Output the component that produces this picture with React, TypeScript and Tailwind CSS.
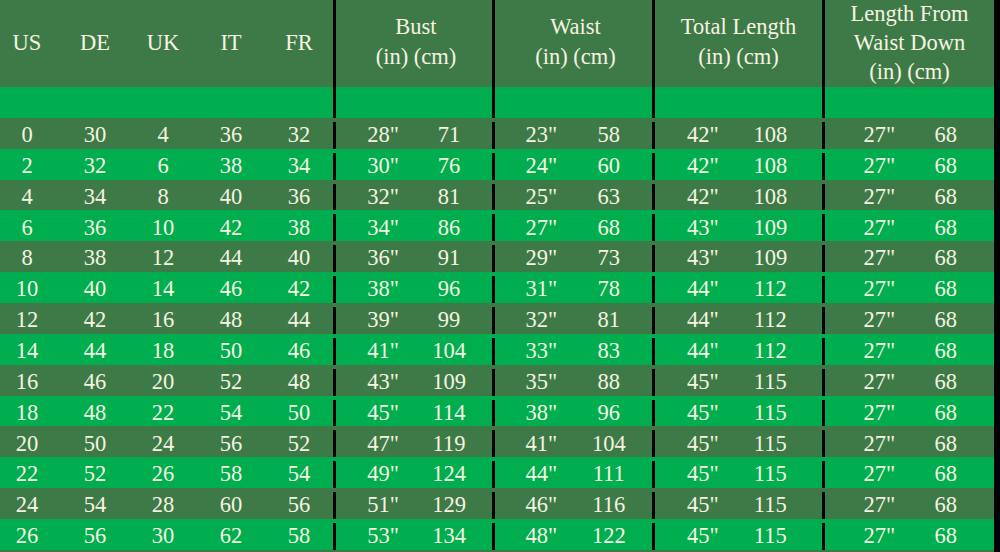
const sizes = [
  { us: 0, de: 30, uk: 4, it: 36, fr: 32, bi: 28, bc: 71, wi: 23, wc: 58, ti: 42, tc: 108, li: 27, lc: 68 },
  { us: 2, de: 32, uk: 6, it: 38, fr: 34, bi: 30, bc: 76, wi: 24, wc: 60, ti: 42, tc: 108, li: 27, lc: 68 },
  { us: 4, de: 34, uk: 8, it: 40, fr: 36, bi: 32, bc: 81, wi: 25, wc: 63, ti: 42, tc: 108, li: 27, lc: 68 },
  { us: 6, de: 36, uk: 10, it: 42, fr: 38, bi: 34, bc: 86, wi: 27, wc: 68, ti: 43, tc: 109, li: 27, lc: 68 },
  { us: 8, de: 38, uk: 12, it: 44, fr: 40, bi: 36, bc: 91, wi: 29, wc: 73, ti: 43, tc: 109, li: 27, lc: 68 },
  { us: 10, de: 40, uk: 14, it: 46, fr: 42, bi: 38, bc: 96, wi: 31, wc: 78, ti: 44, tc: 112, li: 27, lc: 68 },
  { us: 12, de: 42, uk: 16, it: 48, fr: 44, bi: 39, bc: 99, wi: 32, wc: 81, ti: 44, tc: 112, li: 27, lc: 68 },
  { us: 14, de: 44, uk: 18, it: 50, fr: 46, bi: 41, bc: 104, wi: 33, wc: 83, ti: 44, tc: 112, li: 27, lc: 68 },
  { us: 16, de: 46, uk: 20, it: 52, fr: 48, bi: 43, bc: 109, wi: 35, wc: 88, ti: 45, tc: 115, li: 27, lc: 68 },
  { us: 18, de: 48, uk: 22, it: 54, fr: 50, bi: 45, bc: 114, wi: 38, wc: 96, ti: 45, tc: 115, li: 27, lc: 68 },
  { us: 20, de: 50, uk: 24, it: 56, fr: 52, bi: 47, bc: 119, wi: 41, wc: 104, ti: 45, tc: 115, li: 27, lc: 68 },
  { us: 22, de: 52, uk: 26, it: 58, fr: 54, bi: 49, bc: 124, wi: 44, wc: 111, ti: 45, tc: 115, li: 27, lc: 68 },
  { us: 24, de: 54, uk: 28, it: 60, fr: 56, bi: 51, bc: 129, wi: 46, wc: 116, ti: 45, tc: 115, li: 27, lc: 68 },
  { us: 26, de: 56, uk: 30, it: 62, fr: 58, bi: 53, bc: 134, wi: 48, wc: 122, ti: 45, tc: 115, li: 27, lc: 68 },
];

const Divider = () => <div className="w-[3px] self-stretch bg-black shrink-0" />;

function Pair({ width, inch, cm, pl, pr }: { width: string; inch: number; cm: number; pl: string; pr: string }) {
  return (
    <div className={`${width} grid grid-cols-2 shrink-0`}>
      <div className={`text-center ${pl}`}>{inch}"</div>
      <div className={`text-center ${pr}`}>{cm}</div>
    </div>
  );
}

function Row({ s, bright }: { s: (typeof sizes)[number]; bright: boolean }) {
  return (
    <div className={`flex h-[30.87px] items-center pt-[4px] ${bright ? "bg-[#00ae50]" : "bg-[#3e7a47]"}`}>
      <div className="w-[61px] pr-[7px] text-center">{s.us}</div>
      <div className="w-[68px] text-center">{s.de}</div>
      <div className="w-[68px] text-center">{s.uk}</div>
      <div className="w-[68px] text-center">{s.it}</div>
      <div className="w-[68px] text-center">{s.fr}</div>
      <Divider />
      <Pair width="w-[156px]" inch={s.bi} cm={s.bc} pl="pl-[16px]" pr="pr-[8px]" />
      <Divider />
      <Pair width="w-[157px]" inch={s.wi} cm={s.wc} pl="pl-[14px]" pr="pr-[8px]" />
      <Divider />
      <Pair width="w-[167px]" inch={s.ti} cm={s.tc} pl="pl-[12px]" pr="pr-[20px]" />
      <Divider />
      <Pair width="w-[169px]" inch={s.li} cm={s.lc} pl="pl-[24px]" pr="pr-[12px]" />
    </div>
  );
}

export default function App() {
  return (
    <div className="w-[1000px] h-[552px] overflow-hidden bg-black text-[#f6f3e2] text-[22.5px] leading-none font-['Liberation_Serif','Times_New_Roman',serif]">
      <div className="w-[994px] h-[552px] bg-[#3e7a47] flex flex-col">
        {/* header */}
        <div className="flex h-[87px] items-center bg-[#3e7a47]">
          <div className="w-[61px] pr-[7px] text-center">US</div>
          <div className="w-[68px] text-center">DE</div>
          <div className="w-[68px] text-center">UK</div>
          <div className="w-[68px] text-center">IT</div>
          <div className="w-[68px] text-center">FR</div>
          <Divider />
          <div className="w-[156px] text-center leading-[30px] pl-[4px] pb-[3px]">Bust<br />(in) (cm)</div>
          <Divider />
          <div className="w-[157px] text-center leading-[30px] pl-[4px] pb-[3px]">Waist<br />(in) (cm)</div>
          <Divider />
          <div className="w-[167px] text-center leading-[30px] pb-[3px]">Total Length<br />(in) (cm)</div>
          <Divider />
          <div className="w-[169px] text-center leading-[29px] pb-[3px]">Length From<br />Waist Down<br />(in) (cm)</div>
        </div>
        <div className="flex h-[30.87px] bg-[#00ae50]">
          <div className="w-[333px]" />
          <Divider />
          <div className="w-[156px]" />
          <Divider />
          <div className="w-[157px]" />
          <Divider />
          <div className="w-[167px]" />
          <Divider />
          <div className="w-[169px]" />
        </div>
        {sizes.map((s, i) => (
          <Row key={s.us} s={s} bright={i % 2 === 1} />
        ))}
      </div>
    </div>
  );
}
